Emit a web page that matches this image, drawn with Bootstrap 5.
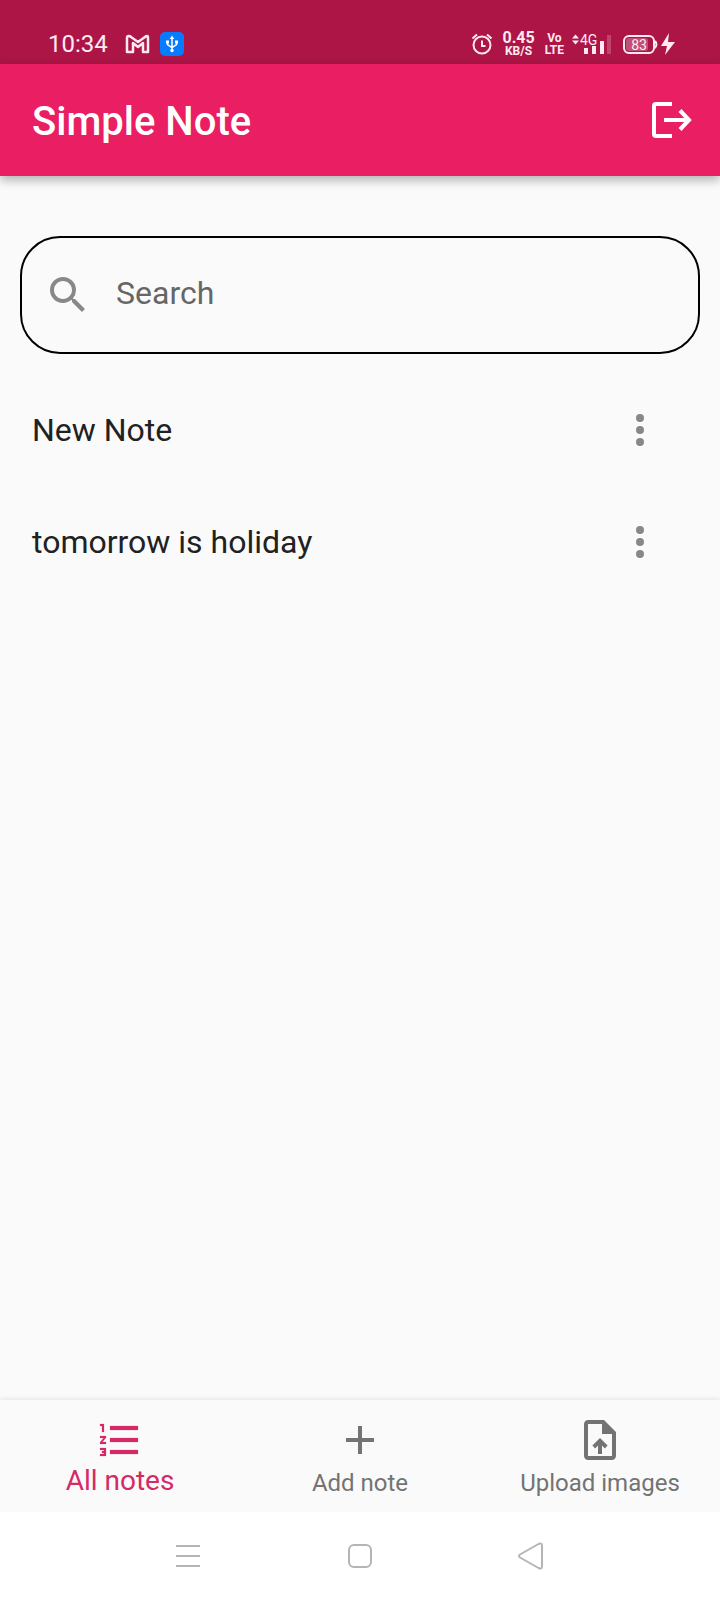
<!DOCTYPE html>
<html lang="en">
<head>
<meta charset="utf-8">
<meta name="viewport" content="width=device-width, initial-scale=1">
<title>Simple Note</title>
<link href="https://cdn.jsdelivr.net/npm/bootstrap@5.3.0/dist/css/bootstrap.min.css" rel="stylesheet">
<style>
  body { font-family: Roboto, "Liberation Sans", sans-serif; background: #fafafa; color: #212121; }
  svg { display: block; flex: none; }
  .status-bar { height: 64px; background: #ad1547; color: #ffeaf2; padding: 24px 44px 0 48px; }
  .status-side { height: 40px; }
  .usb-badge { margin-left: 10px; }
  .clock { font-size: 24px; line-height: 40px; }
  .two-line { font-weight: 700; text-align: center; }
  .two-line + .two-line { margin-left: 10px; }
  .line-lg { font-size: 16px; line-height: 14px; }
  .line-sm { font-size: 12px; line-height: 12px; }
  .app-bar { height: 112px; background: #e91e63; box-shadow: 0 4px 10px rgba(0,0,0,.3); padding: 0 24px 0 32px; position: relative; }
  .app-title { font-size: 40px; line-height: 48px; font-weight: 500; padding-top: 4px; }
  .icon-btn { background: none; border: 0; padding: 0; color: inherit; }
  .content { padding-top: 60px; }
  .search-box { height: 118px; margin: 0 20px; padding: 0 24px 0 22px; border: 2px solid #000; border-radius: 40px; color: #888; gap: 24px; }
  .search-box input { border: 0; outline: 0; background: none; padding: 0 0 4px; font-size: 32px; line-height: 40px; color: #212121; min-width: 0; }
  .search-box input::placeholder { color: #666; opacity: 1; }
  .notes { margin-top: 20px; }
  .note-row { height: 112px; padding: 0 56px 0 32px; background: none; border: 0; color: #212121; font-size: 32px; line-height: 40px; }
  .note-row .icon-btn { color: #888; }
  .tabs { height: 112px; box-shadow: 0 -1px 5px rgba(0,0,0,.09); }
  .tab-link { color: #737373; font-size: 24px; line-height: 30px; text-decoration: none; padding-top: 16px; gap: 4px; }
  .tab-link.active { color: #d42a67; font-size: 28px; line-height: 26px; }
  .system-nav { height: 88px; background: #fff; color: #b5b5b5; position: relative; }
  .system-nav button { width: 172px; }
</style>
</head>
<body>
<div class="min-vh-100 d-flex flex-column">
  <div class="status-bar d-flex justify-content-between align-items-start">
    <div class="status-side d-flex align-items-center">
      <span class="clock">10:34</span>
      <svg class="ms-3" width="26" height="24" viewBox="0 0 26 24" fill="none" stroke="currentColor" stroke-width="2.500" stroke-linejoin="round"><path d="M3 20V6q0-2 2-2 1 0 2 1l7 5 7-5q1-1 2-1 1 0 1 2v14h-5v-9l-5 4-5-4v9z"/></svg>
      <svg class="usb-badge" width="24" height="24" viewBox="0 0 24 24"><rect width="24" height="24" rx="5" fill="#087cff"/><g fill="none" stroke="#fff" stroke-width="1.500"><path d="M12 5v13M7.500 10v2.500l4.500 3 4.500-3V9"/></g><path d="M12 3.500l-2.300 3.500h4.600zM6 8.500h3v3H6zM15 8.500h3v3h-3z" fill="#fff"/><circle cx="12" cy="18.500" r="1.700" fill="#fff"/></svg>
    </div>
    <div class="status-side d-flex align-items-center">
      <svg width="24" height="24" viewBox="0 0 24 24" fill="none" stroke="currentColor" stroke-width="2"><circle cx="12" cy="13" r="8.500"/><path d="M12 8.500V14h3.500M2.500 6.500l4.500-4M21.500 6.500l-4.500-4"/></svg>
      <div class="two-line ms-2"><div class="line-lg">0.45</div><div class="line-sm">KB/S</div></div>
      <div class="two-line"><div class="line-sm">Vo</div><div class="line-sm">LTE</div></div>
      <svg class="ms-2" width="42" height="24" viewBox="0 0 42 24" fill="currentColor"><path d="M3.500 2.500l3.500 4H0zM3.500 12.500l3.500-4H0z"/><text x="8" y="13" font-size="14">4G</text><path d="M12 16h4v6h-4zM20 14h4v8h-4zM28 9h4v13h-4z"/><path d="M35 3h4v19h-4z" opacity=".22"/></svg>
      <svg class="ms-2" width="54" height="24" viewBox="0 0 54 24"><rect x="2" y="4" width="30" height="17" rx="5" fill="none" stroke="currentColor" stroke-width="2"/><rect x="4" y="6" width="22" height="13" rx="3" fill="#fff" opacity=".25"/><path d="M33 9q3 3.500 0 7" fill="none" stroke="currentColor" stroke-width="2"/><text x="17" y="18" font-size="14" text-anchor="middle" fill="currentColor">83</text><path d="M47 1L39 14h6l-2 9 10-13h-7z" fill="currentColor"/></svg>
    </div>
  </div>

  <header class="app-bar d-flex align-items-center justify-content-between text-white">
    <h1 class="app-title mb-0">Simple Note</h1>
    <button class="icon-btn" type="button" aria-label="Log out">
      <svg width="48" height="48" viewBox="0 0 48 48" fill="none" stroke="currentColor" stroke-width="4"><path d="M24 8H8q-2 0-2 2v28q0 2 2 2h16"/><path d="M16 24h25M32 14.500L41 24l-9 9.500"/></svg>
    </button>
  </header>

  <main class="content flex-grow-1">
    <div class="search-box d-flex align-items-center">
      <label for="search" aria-label="Search"><svg width="48" height="48" viewBox="0 0 24 24" fill="currentColor"><path d="M15.500 14h-.79l-.28-.27A6.471 6.471 0 0 0 16 9.500 6.500 6.500 0 1 0 9.500 16c1.610 0 3.090-.59 4.230-1.570l.27.28v.79l5 4.990L20.490 19l-4.990-5zm-6 0C7.010 14 5 11.990 5 9.500S7.010 5 9.500 5 14 7.010 14 9.500 11.990 14 9.500 14z"/></svg></label>
      <input class="flex-grow-1" id="search" type="text" placeholder="Search">
    </div>
    <ul class="notes list-group list-group-flush">
      <li class="note-row list-group-item d-flex align-items-center justify-content-between">New Note
        <button class="icon-btn" type="button" aria-label="Options for New Note"><svg width="48" height="48" viewBox="0 0 24 24" fill="currentColor"><circle cx="12" cy="6" r="2"/><circle cx="12" cy="12" r="2"/><circle cx="12" cy="18" r="2"/></svg></button></li>
      <li class="note-row list-group-item d-flex align-items-center justify-content-between">tomorrow is holiday
        <button class="icon-btn" type="button" aria-label="Options for tomorrow is holiday"><svg width="48" height="48" viewBox="0 0 24 24" fill="currentColor"><circle cx="12" cy="6" r="2"/><circle cx="12" cy="12" r="2"/><circle cx="12" cy="18" r="2"/></svg></button></li>
    </ul>
  </main>

  <nav class="tabs row g-0 text-center" aria-label="Sections">
    <a class="tab-link active col-4 d-flex flex-column align-items-center" href="#all" aria-current="page">
      <svg width="48" height="48" viewBox="0 0 24 24" fill="currentColor"><path d="M2 17h2v.5H3v1h1v.5H2v1h3v-4H2v1zm1-9h1V4H2v1h1v3zm-1 3h1.800L2 13.100v.9h3v-1H3.200L5 10.900V10H2v1zm5-6v2h14V5H7zm0 14h14v-2H7v2zm0-6h14v-2H7v2z" stroke="currentColor" stroke-width=".1"/></svg>
      <span>All notes</span></a>
    <a class="tab-link col-4 d-flex flex-column align-items-center" href="#add">
      <svg width="48" height="48" viewBox="0 0 24 24" fill="currentColor"><path d="M19 13h-6v6h-2v-6H5v-2h6V5h2v6h6v2z"/></svg>
      <span>Add note</span></a>
    <a class="tab-link col-4 d-flex flex-column align-items-center" href="#upload">
      <svg width="48" height="48" viewBox="0 0 24 24" fill="currentColor"><path fill-rule="evenodd" d="M6 2C4.900 2 4 2.900 4 4v16c0 1.100.9 2 2 2h12c1.100 0 2-.9 2-2V8l-6-6zm0 2h7v5h5v11H6z"/><path d="M12 11l-3.800 3.800 1.400 1.400 1.400-1.400V19h2v-4.200l1.400 1.400 1.400-1.400z"/></svg>
      <span>Upload images</span></a>
  </nav>

  <div class="system-nav d-flex justify-content-center">
    <button class="icon-btn d-flex align-items-center justify-content-center" type="button" aria-label="Recent apps"><svg width="28" height="28" viewBox="0 0 28 28" fill="none" stroke="currentColor" stroke-width="2"><path d="M2 4h24M2 14h24M2 24h24"/></svg></button>
    <button class="icon-btn d-flex align-items-center justify-content-center" type="button" aria-label="Home"><svg width="28" height="28" viewBox="0 0 28 28" fill="none" stroke="currentColor" stroke-width="2"><rect x="3" y="3" width="22" height="22" rx="5"/></svg></button>
    <button class="icon-btn d-flex align-items-center justify-content-center" type="button" aria-label="Back"><svg width="28" height="28" viewBox="0 0 28 28" fill="none" stroke="currentColor" stroke-width="2" stroke-linejoin="round"><path d="M2 12.500L20.500 2q3.500-1.500 3.500 1.500v21q0 3-3.500 1.500L2 15.500q-2-1.500 0-3z"/></svg></button>
  </div>
</div>
<script src="https://cdn.jsdelivr.net/npm/bootstrap@5.3.0/dist/js/bootstrap.bundle.min.js"></script>
</body>
</html>
